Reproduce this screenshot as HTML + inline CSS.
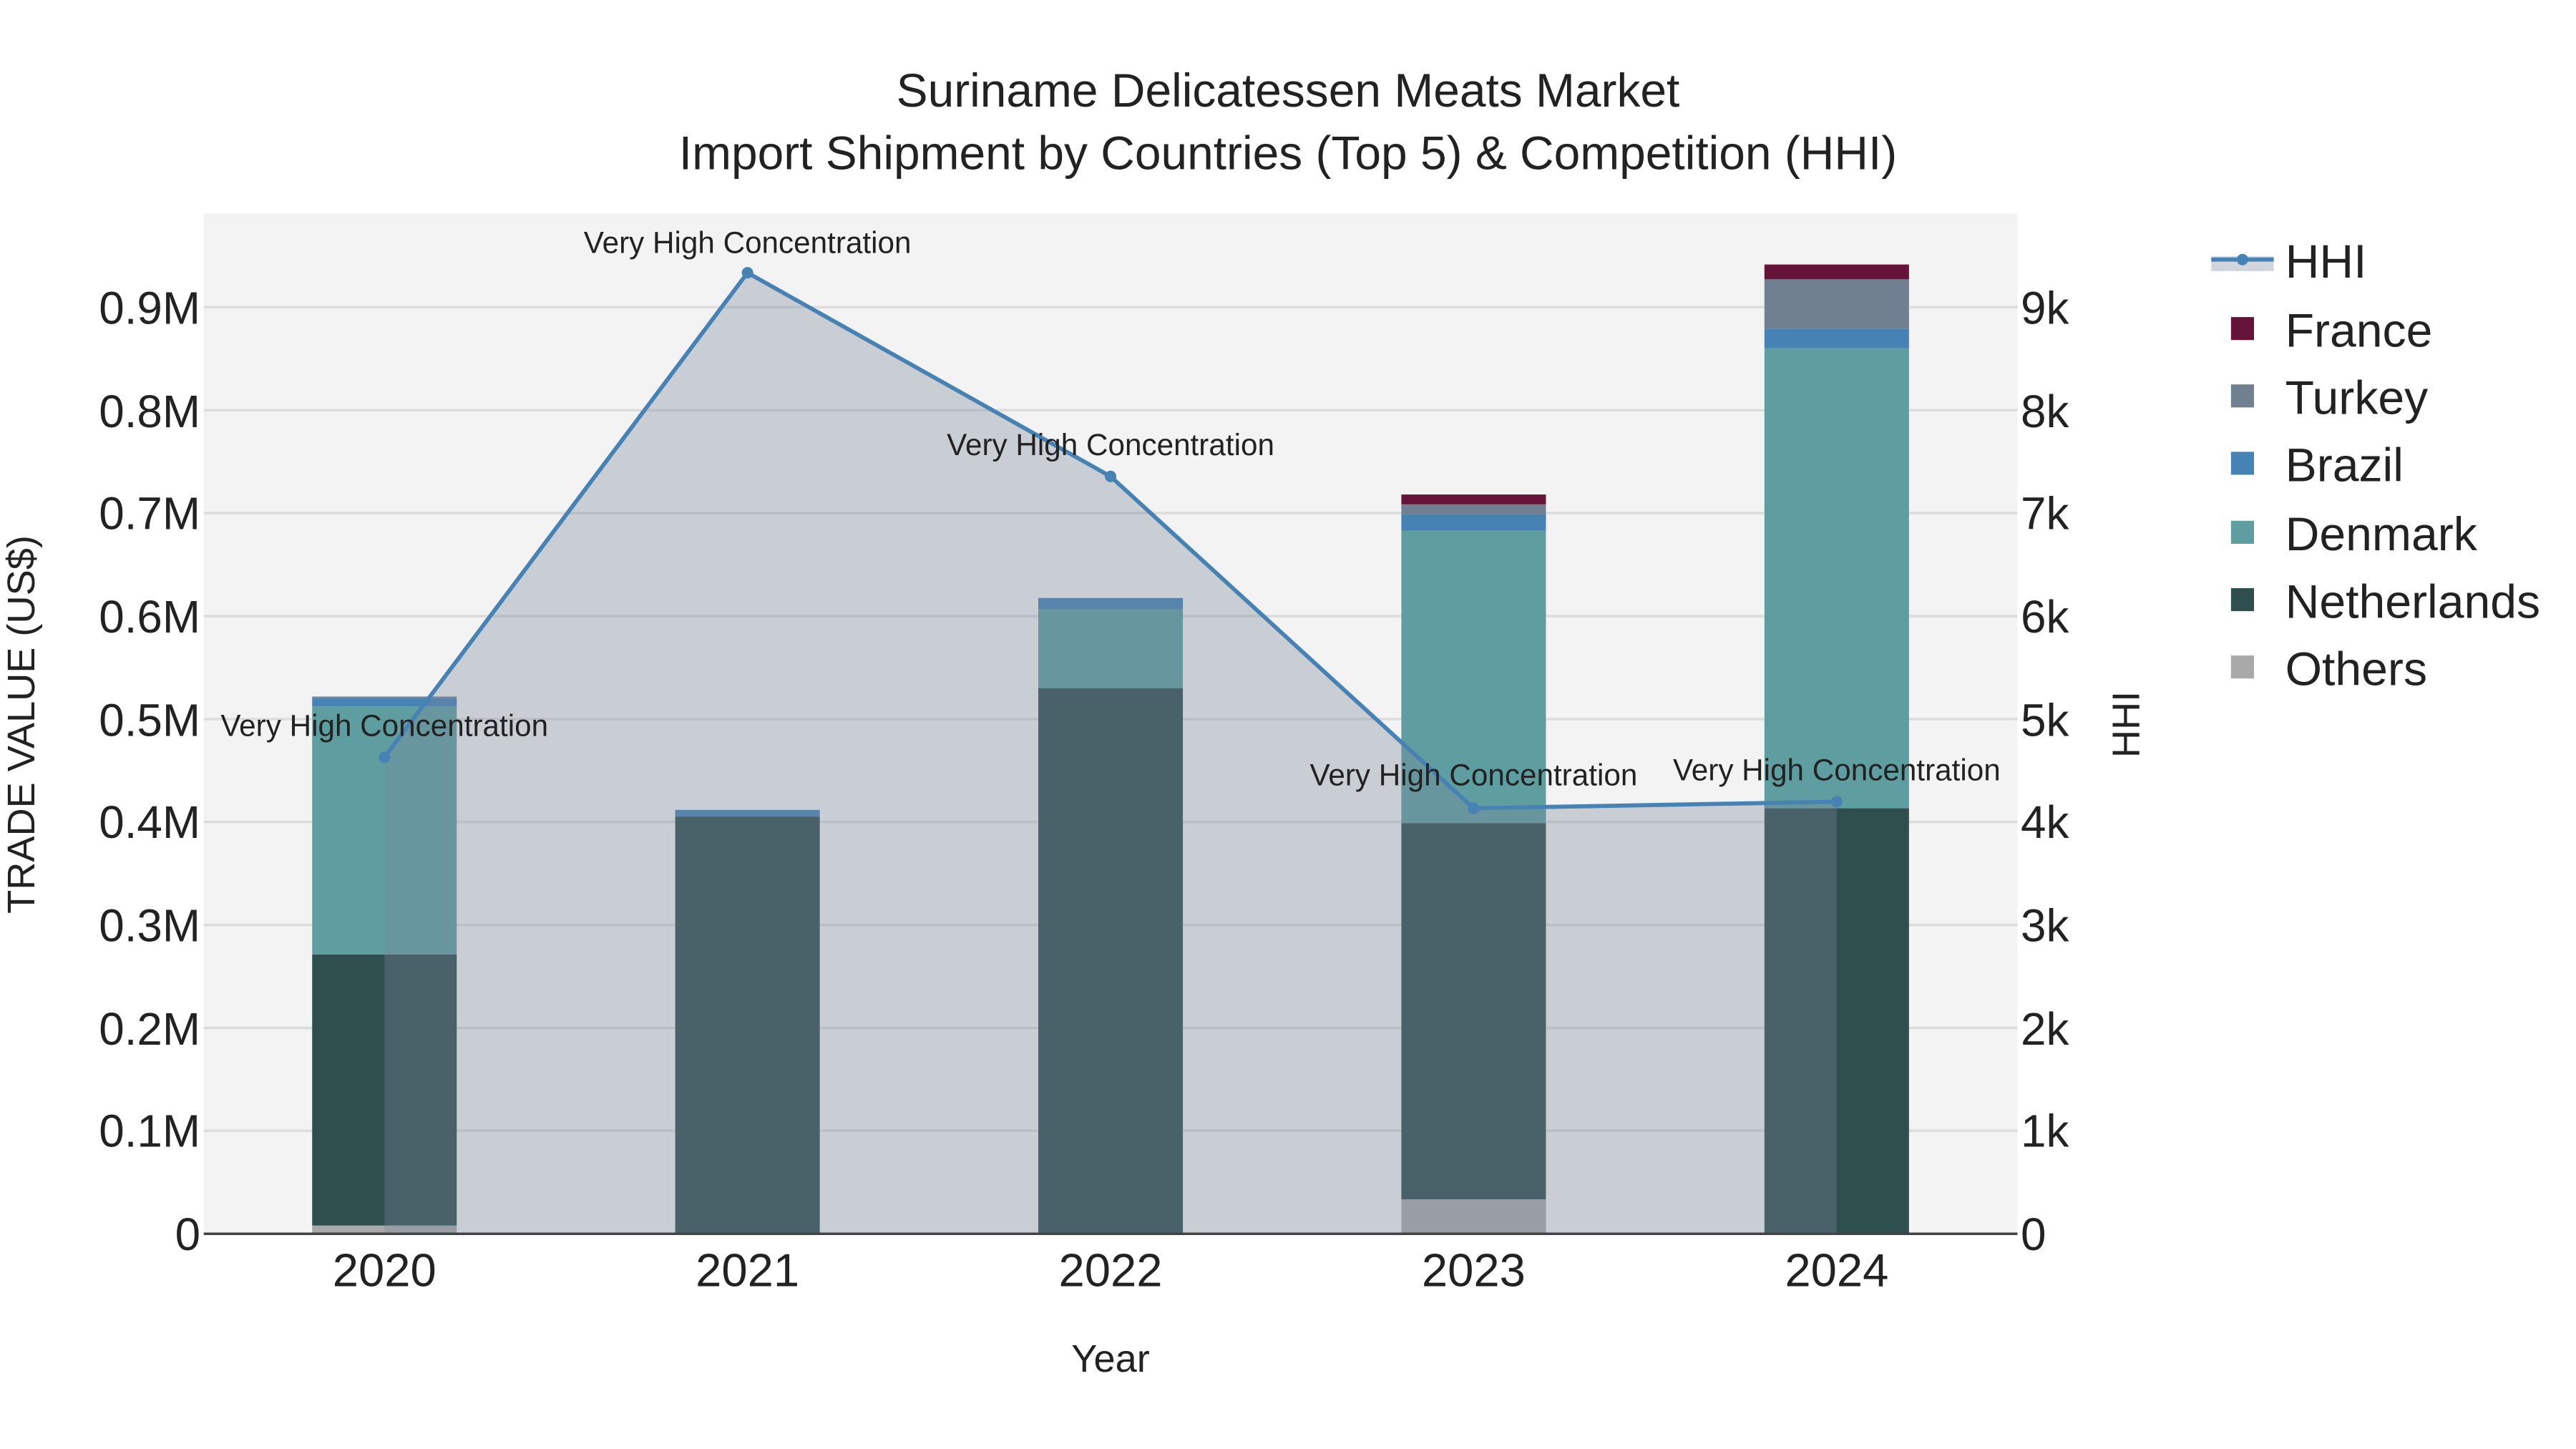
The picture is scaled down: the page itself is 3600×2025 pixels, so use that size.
<!DOCTYPE html>
<html><head><meta charset="utf-8"><style>html,body{margin:0;padding:0;background:#fff}svg{display:block}text{font-family:"Liberation Sans",sans-serif;fill:#222}</style></head>
<body>
<svg width="3600" height="2025" viewBox="0 0 1568 882" xmlns="http://www.w3.org/2000/svg">
<rect width="1568" height="882" fill="#fff"/>
<rect x="124" y="130" width="1104" height="621" fill="#f3f3f3"/>
<g stroke="#dcdcdc" stroke-width="1.5">
<line x1="124" x2="1228" y1="688.3" y2="688.3"/><line x1="124" x2="1228" y1="625.7" y2="625.7"/>
<line x1="124" x2="1228" y1="563" y2="563"/><line x1="124" x2="1228" y1="500.3" y2="500.3"/>
<line x1="124" x2="1228" y1="437.7" y2="437.7"/><line x1="124" x2="1228" y1="375" y2="375"/>
<line x1="124" x2="1228" y1="312.3" y2="312.3"/><line x1="124" x2="1228" y1="249.7" y2="249.7"/>
<line x1="124" x2="1228" y1="187" y2="187"/>
</g>
<g>
<rect x="190" y="746" width="88" height="5" fill="#a9a9a9"/>
<rect x="190" y="581" width="88" height="165" fill="#2f4f4f"/>
<rect x="190" y="430" width="88" height="151" fill="#5f9ea0"/>
<rect x="190" y="425" width="88" height="5" fill="#4682b4"/>
<rect x="190" y="424" width="88" height="1" fill="#708090"/>
<rect x="411" y="497" width="88" height="254" fill="#2f4f4f"/>
<rect x="411" y="493" width="88" height="4" fill="#4682b4"/>
<rect x="632" y="419" width="88" height="332" fill="#2f4f4f"/>
<rect x="632" y="371" width="88" height="48" fill="#5f9ea0"/>
<rect x="632" y="364" width="88" height="7" fill="#4682b4"/>
<rect x="853" y="730" width="88" height="21" fill="#a9a9a9"/>
<rect x="853" y="501" width="88" height="229" fill="#2f4f4f"/>
<rect x="853" y="323" width="88" height="178" fill="#5f9ea0"/>
<rect x="853" y="313" width="88" height="10" fill="#4682b4"/>
<rect x="853" y="307" width="88" height="6" fill="#708090"/>
<rect x="853" y="301" width="88" height="6" fill="#66133a"/>
<rect x="1074" y="492" width="88" height="259" fill="#2f4f4f"/>
<rect x="1074" y="212" width="88" height="280" fill="#5f9ea0"/>
<rect x="1074" y="200" width="88" height="12" fill="#4682b4"/>
<rect x="1074" y="170" width="88" height="30" fill="#708090"/>
<rect x="1074" y="161" width="88" height="9" fill="#66133a"/>
</g>
<path d="M234,751 L234,461 L455,166 L676,290 L897,492 L1118,488 L1118,751 Z" fill="rgb(124,135,155)" fill-opacity="0.35"/>
<polyline points="234,461 455,166 676,290 897,492 1118,488" fill="none" stroke="#4682b4" stroke-width="2.5"/>
<g fill="#4682b4"><circle cx="234" cy="461" r="3.5"/><circle cx="455" cy="166" r="3.5"/><circle cx="676" cy="290" r="3.5"/><circle cx="897" cy="492" r="3.5"/><circle cx="1118" cy="488" r="3.5"/></g>
<line x1="124" x2="1228" y1="751" y2="751" stroke="#444" stroke-width="1.5"/>
<g font-size="18.4" text-anchor="middle">
<text x="234" y="448">Very High Concentration</text>
<text x="455" y="154">Very High Concentration</text>
<text x="676" y="277">Very High Concentration</text>
<text x="897" y="478">Very High Concentration</text>
<text x="1118" y="475">Very High Concentration</text>
</g>
<g font-size="28.7" text-anchor="middle">
<text x="784" y="65">Suriname Delicatessen Meats Market</text>
<text x="784" y="103">Import Shipment by Countries (Top 5) &amp; Competition (HHI)</text>
</g>
<g font-size="27.8" text-anchor="end">
<text x="122" y="761">0</text><text x="122" y="698">0.1M</text><text x="122" y="636">0.2M</text>
<text x="122" y="573">0.3M</text><text x="122" y="510">0.4M</text><text x="122" y="448">0.5M</text>
<text x="122" y="385">0.6M</text><text x="122" y="322">0.7M</text><text x="122" y="260">0.8M</text>
<text x="122" y="197">0.9M</text>
</g>
<g font-size="27.8">
<text x="1230" y="761">0</text><text x="1230" y="698">1k</text><text x="1230" y="636">2k</text>
<text x="1230" y="573">3k</text><text x="1230" y="510">4k</text><text x="1230" y="448">5k</text>
<text x="1230" y="385">6k</text><text x="1230" y="322">7k</text><text x="1230" y="260">8k</text>
<text x="1230" y="197">9k</text>
</g>
<g font-size="28.4" text-anchor="middle">
<text x="234" y="783">2020</text><text x="455" y="783">2021</text><text x="676" y="783">2022</text>
<text x="897" y="783">2023</text><text x="1118" y="783">2024</text>
</g>
<text x="676" y="835" font-size="23.6" text-anchor="middle">Year</text>
<text transform="translate(21,441) rotate(-90)" font-size="23.6" text-anchor="middle">TRADE VALUE (US$)</text>
<text transform="translate(1302,441) rotate(-90)" font-size="23.6" text-anchor="middle">HHI</text>
<rect x="1346" y="156" width="38" height="9" fill="rgb(124,135,155)" fill-opacity="0.35"/>
<line x1="1346" x2="1384" y1="158" y2="158" stroke="#4682b4" stroke-width="2.5"/>
<circle cx="1365" cy="158" r="3.5" fill="#4682b4"/>
<rect x="1358" y="193" width="14" height="14" fill="#66133a"/>
<rect x="1358" y="234" width="14" height="14" fill="#708090"/>
<rect x="1358" y="275" width="14" height="14" fill="#4682b4"/>
<rect x="1358" y="317" width="14" height="14" fill="#5f9ea0"/>
<rect x="1358" y="358" width="14" height="14" fill="#2f4f4f"/>
<rect x="1358" y="399" width="14" height="14" fill="#a9a9a9"/>
<g font-size="28.8">
<text x="1391" y="169">HHI</text><text x="1391" y="211">France</text><text x="1391" y="252">Turkey</text>
<text x="1391" y="293">Brazil</text><text x="1391" y="335">Denmark</text><text x="1391" y="376">Netherlands</text>
<text x="1391" y="417">Others</text>
</g>
</svg>
</body></html>
